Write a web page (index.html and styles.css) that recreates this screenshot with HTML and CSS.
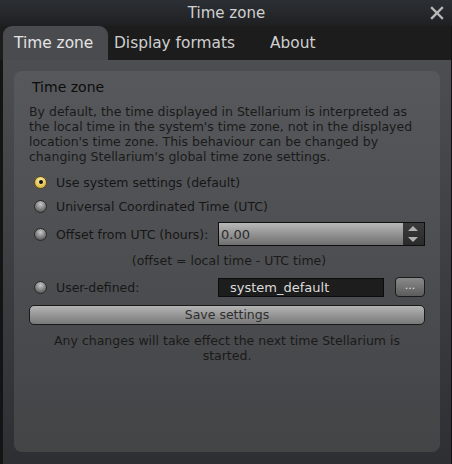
FILE: index.html
```html
<!DOCTYPE html>
<html>
<head>
<meta charset="utf-8">
<link rel="stylesheet" href="styles.css">
</head>
<body>
<div class="window">
  <div class="titlebar">
    <span class="title">Time zone</span>
    <svg class="close" width="14" height="14" viewBox="0 0 14 14"><path d="M2 2 L12 12 M12 2 L2 12" stroke="#b8b8b8" stroke-width="2.4" stroke-linecap="square"/></svg>
  </div>
  <div class="tabs">
    <div class="tab active">Time zone</div>
    <div class="tab formats">Display formats</div>
    <div class="tab about">About</div>
  </div>
  <div class="content">
    <div class="panel">
      <div class="heading">Time zone</div>
      <p class="desc">By default, the time displayed in Stellarium is interpreted as the local time in the system's time zone, not in the displayed location's time zone. This behaviour can be changed by changing Stellarium's global time zone settings.</p>
      <div class="row r1"><span class="radio checked"></span><span class="label">Use system settings (default)</span></div>
      <div class="row r2"><span class="radio"></span><span class="label">Universal Coordinated Time (UTC)</span></div>
      <div class="row r3"><span class="radio"></span><span class="label">Offset from UTC (hours):</span>
        <div class="spin"><span class="spinval">0.00</span><span class="arrows"><svg width="20" height="22" viewBox="0 0 20 22"><path d="M5 8 L10 3 L15 8 Z" fill="#b0b0b0"/><path d="M5 14 L10 19 L15 14 Z" fill="#b0b0b0"/></svg></span></div>
      </div>
      <div class="note">(offset = local time - UTC time)</div>
      <div class="row r4"><span class="radio"></span><span class="label">User-defined:</span>
        <div class="field">system_default</div>
        <div class="dots">...</div>
      </div>
      <div class="save">Save settings</div>
      <p class="footer">Any changes will take effect the next time Stellarium is started.</p>
    </div>
  </div>
</div>
</body>
</html>
```

FILE: styles.css
```css
* { box-sizing: border-box; }
html, body { margin: 0; padding: 0; background: #111; }
body { font-family: "DejaVu Sans", sans-serif; }
.window {
  width: 452px; height: 464px;
  display: flex; flex-direction: column;
  background: #141414;
}
.titlebar {
  height: 26px; position: relative;
  background: linear-gradient(#2c3035, #1e1f21);
  display: flex; align-items: center; justify-content: center;
}
.title { color: #d0d0d0; font-size: 15px; margin-left: 1px; }
.close { position: absolute; right: 8px; top: 6px; }
.tabs {
  height: 34px; background: #1c1c1c;
  display: flex; align-items: stretch;
  padding-left: 3px; margin-right: 1px;
}
.tab {
  color: #cfcfcf; font-size: 15.4px;
  display: flex; align-items: center;
}
.tab.active {
  width: 105px; padding-left: 11px;
  background: #4a4b4e; color: #e4e4e4;
  border-radius: 9px 9px 0 0;
}
.tab.formats { padding-left: 6px; width: 162px; }
.tab.about { padding-left: 0; }
.content {
  flex: 1;
  margin-left: 3px; margin-right: 1px;
  background: linear-gradient(#4d4e52, #2e2f32);
  padding: 11px 11px 12px 11px;
}
.panel {
  height: 381px;
  border-radius: 8px;
  background: linear-gradient(#57585b, #434446);
  padding: 7px 15px 0 15px;
  color: #161616;
  font-size: 12.5px;
}
.heading { font-size: 14px; padding-left: 3px; color: #0c0c0c; height: 18px; line-height: 18px; }
.desc { margin: 8px 0 0 0; line-height: 15px; color: #1a1a1a; }
.row { display: flex; align-items: center; }
.r1 { margin-top: 6px; height: 24px; }
.r2 { height: 24px; }
.r3 { height: 32px; }
.r4 { height: 28px; margin-top: 1px; }
.radio {
  flex: none;
  width: 13px; height: 13px; border-radius: 50%;
  margin-left: 5px; margin-right: 9px;
  background: radial-gradient(circle at 50% 30%, #c8c8c8, #5a5a5a 80%);
  border: 1px solid #2a2a2a;
  display: inline-flex; align-items: center; justify-content: center;
}
.radio.checked {
  background: radial-gradient(circle at 50% 35%, #fff2b0, #d8b540 75%);
  border-color: #5a4a1a;
}
.radio.checked::after {
  content: ""; width: 4px; height: 4px; border-radius: 50%; background: #111;
}
.label { color: #161616; flex: none; }
.r3 .label { width: 162px; }
.spin {
  flex: none;
  width: 207px; height: 24px;
  border: 1px solid #0e0e0e;
  background: linear-gradient(#b8b8b8, #6e6e6e);
  display: flex; align-items: center;
}
.spinval { flex: 1; padding-left: 2px; color: #2a2a2a; font-size: 13px; }
.arrows {
  width: 21px; height: 22px; background: linear-gradient(#3b3b3b, #2a2a2a);
  display: flex;
}
.note { text-align: center; height: 22px; line-height: 22px; padding-left: 4px; color: #1a1a1a; }
.r4 .label { width: 162px; }
.field {
  flex: none;
  width: 166px; height: 19px; background: #1d1d1d; border: 1px solid #0c0c0c;
  color: #dcdcdc; font-size: 13px; padding-left: 11px; line-height: 17px;
}
.dots {
  flex: none;
  margin-left: 11px; width: 30px; height: 20px; border-radius: 4px;
  border: 1px solid #1a1a1a;
  background: linear-gradient(#8a8a8a, #5c5c5c);
  color: #e0e0e0; font-size: 11px; text-align: center; line-height: 15px;
}
.save {
  margin-top: 4px; height: 20px; border-radius: 5px;
  border: 1px solid #1a1a1a;
  background: linear-gradient(#b4b4b4, #787878);
  text-align: center; line-height: 18px; color: #2e2e2e; font-size: 12.5px;
}
.footer { margin: 8px 10px 0 10px; text-align: center; line-height: 15px; color: #1a1a1a; }
```
